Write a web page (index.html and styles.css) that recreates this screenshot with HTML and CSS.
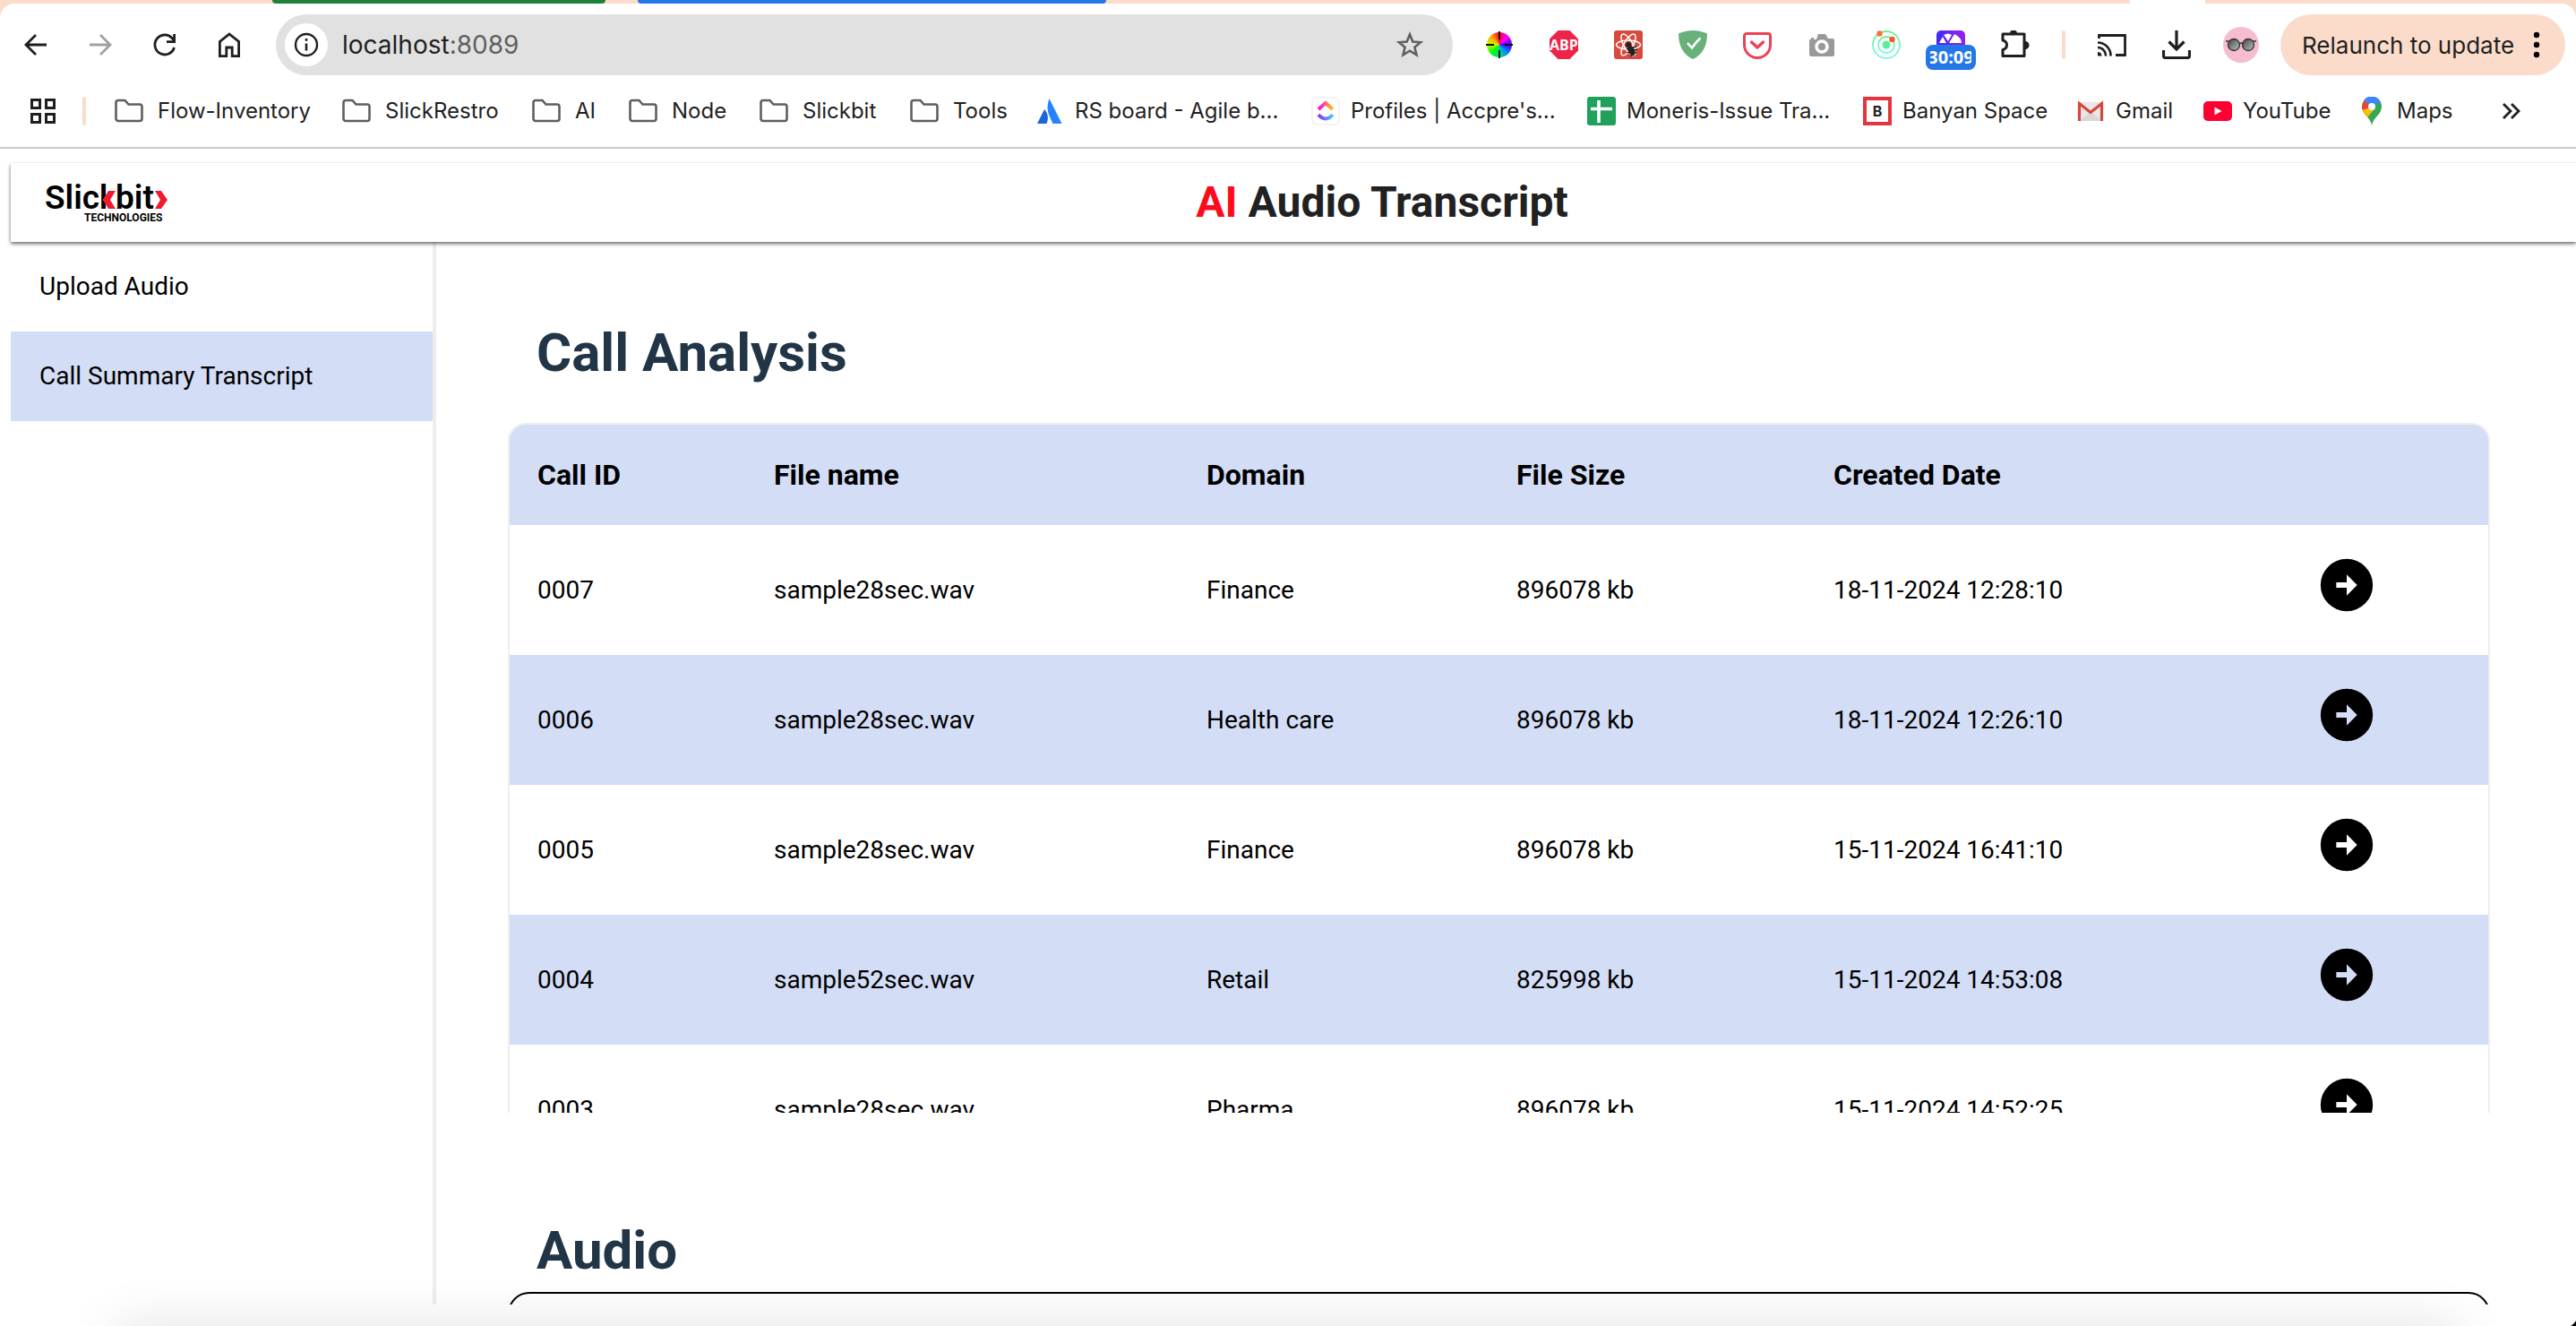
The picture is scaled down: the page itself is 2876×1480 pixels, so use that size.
FILE: index.html
```html
<!DOCTYPE html>
<html lang="en">
<head>
<meta charset="utf-8">
<title>AI Audio Transcript</title>
<link rel="stylesheet" href="styles.css">
</head>
<body>
<svg class="defs" aria-hidden="true">
  <symbol id="folder" viewBox="0 0 32 32"><path d="M1.500 6.500a2.500 2.500 0 0 1 2.500-2.500h7.500l4 4.500h12.500a2.500 2.500 0 0 1 2.500 2.500v13.500a2.500 2.500 0 0 1-2.500 2.500h-24a2.500 2.500 0 0 1-2.500-2.500z" fill="none" stroke="#5f5f5f" stroke-width="2.600"/></symbol>
  <symbol id="go" viewBox="0 0 24 24"><path d="M12 2a10 10 0 1 0 0 20 10 10 0 0 0 0-20zm0 14v-3H8v-2h4V8l4 4z"/></symbol>
</svg>

<div class="chrome">
  <div class="tabs"><i class="gap1"></i><i class="group green"></i><i class="gap2"></i><i class="group blue"></i><i class="gap3"></i><i class="active-tab"></i></div>
  <div class="toolbar">
    <div class="nav">
      <button aria-label="Back"><svg viewBox="0 0 32 32"><path d="M28 16H5M16 5 5 16l11 11" fill="none" stroke="#1f1f1f" stroke-width="2.800"/></svg></button>
      <button aria-label="Forward"><svg viewBox="0 0 32 32"><path d="M4 16h23M16 5l11 11-11 11" fill="none" stroke="#a0a0a0" stroke-width="2.800"/></svg></button>
      <button aria-label="Reload"><svg viewBox="0 0 32 32"><path d="M26.500 19a11 11 0 1 1-2.500-10.500l2 2.500" fill="none" stroke="#1f1f1f" stroke-width="2.800"/><path d="M28 4v10H18v-2.800h7.200V4z" fill="#1f1f1f"/></svg></button>
      <button aria-label="Home"><svg viewBox="0 0 32 32"><path d="M5.400 28.600V12.500L16 4l10.600 8.500v16.100h-7.400V19h-6.400v9.600z" fill="none" stroke="#1f1f1f" stroke-width="2.800"/></svg></button>
    </div>
    <div class="address">
      <button class="info" aria-label="Site information"><svg viewBox="0 0 32 32"><circle cx="16" cy="16" r="12" fill="none" stroke="#1f1f1f" stroke-width="2.400"/><path d="M16 14.500v8M16 9v2.800" stroke="#1f1f1f" stroke-width="2.600"/></svg></button>
      <div class="url">localhost<span>:8089</span></div>
      <button class="star" aria-label="Bookmark this page"><svg viewBox="0 0 32 32"><path d="M16 4.500l3.300 8 8.700.7-6.600 5.600 2.100 8.500-7.500-4.600-7.500 4.600 2.100-8.500L4 13.200l8.700-.7z" fill="none" stroke="#5f5f5f" stroke-width="2.600"/></svg></button>
    </div>
    <div class="ext">
      <button aria-label="Color picker"><span class="wheel"></span><svg class="over" viewBox="0 0 32 32"><path d="M16 1v9M16 22v9M1 16h9M22 16h9" stroke="#111" stroke-width="2"/></svg></button>
      <button aria-label="Adblock Plus"><svg viewBox="0 0 32 32"><path d="M9.500 0h13L32 9.500v13L22.500 32h-13L0 22.500v-13z" fill="#ed2448"/><text x="16" y="22" text-anchor="middle" class="abp">ABP</text></svg></button>
      <button aria-label="React tools"><svg viewBox="0 0 32 32"><rect width="32" height="32" rx="3" fill="#d64b3e"/><g fill="none" stroke="#fff" stroke-width="1.500"><ellipse cx="16" cy="16" rx="13.500" ry="5"/><ellipse cx="16" cy="16" rx="13.500" ry="5" transform="rotate(60 16 16)"/><ellipse cx="16" cy="16" rx="13.500" ry="5" transform="rotate(120 16 16)"/></g><circle cx="16" cy="16" r="3" fill="#222"/><ellipse cx="19.500" cy="22.500" rx="3.500" ry="6" transform="rotate(-25 19.500 22.500)" fill="#222"/><path d="M14 21l11-3M15 25l11-4M18 29l7-5" stroke="#222" stroke-width="1.500"/></svg></button>
      <button aria-label="AdGuard"><svg viewBox="0 0 32 32"><path d="M16 0c6 0 11 1.200 16 3.500C32 17 27 27 16 32 5 27 0 17 0 3.500 5 1.200 10 0 16 0z" fill="#68b17b"/><path d="M10 14l5 5.500c3-4.500 6-8 9.500-11" fill="none" stroke="#fff" stroke-width="2.600"/></svg></button>
      <button aria-label="Pocket"><svg viewBox="0 0 32 32"><path d="M4 3.500h24a2.500 2.500 0 0 1 2.500 2.500v10a14.500 14.500 0 0 1-29 0V6A2.500 2.500 0 0 1 4 3.500z" fill="none" stroke="#ef4056" stroke-width="3"/><path d="M9.500 13l6.500 6 6.500-6" fill="none" stroke="#ef4056" stroke-width="3.400" stroke-linecap="round" stroke-linejoin="round"/></svg></button>
      <button aria-label="Screenshot"><svg viewBox="0 0 32 32"><path d="M2 10h2V8h3v2h3l2-6h8l3 5h5a2 2 0 0 1 2 2v16a2 2 0 0 1-2 2H4a2 2 0 0 1-2-2z" fill="#999"/><circle cx="16" cy="18" r="6" fill="none" stroke="#fff" stroke-width="3.500"/></svg></button>
      <button aria-label="Orbit"><svg viewBox="0 0 32 32"><defs><linearGradient id="orb" x2="0" y2="1"><stop offset="0" stop-color="#6ff08a"/><stop offset="1" stop-color="#7ff5ea"/></linearGradient></defs><circle cx="16" cy="16" r="15" fill="none" stroke="url(#orb)" stroke-width="1.800"/><circle cx="16" cy="16" r="9" fill="none" stroke="url(#orb)" stroke-width="1.800"/><circle cx="16" cy="16" r="4.500" fill="#5deb9c"/><circle cx="8.500" cy="3.500" r="3.200" fill="#f4743b"/><circle cx="22.500" cy="10" r="3.200" fill="#ee5a2e"/></svg></button>
      <button aria-label="Timer"><svg viewBox="0 0 32 32"><defs><linearGradient id="vg"><stop offset="0" stop-color="#3d2bf5"/><stop offset="1" stop-color="#9b1df0"/></linearGradient></defs><rect y="6" width="32" height="26" fill="url(#vg)"/><rect width="32" height="12" rx="5" fill="url(#vg)"/><path d="M3 14l4-7 4 7zM8 5q5-3 9 0l-4 7zM20 4q8 4 8 10H14z" fill="#fff"/></svg><b class="badge"><span>30:09</span></b></button>
      <button aria-label="Extensions"><svg viewBox="0 0 32 32"><path d="M2 4h24v24.500H2V21.500c6-1.500 6-9 0-10.500z" fill="none" stroke="#1f1f1f" stroke-width="3" stroke-linejoin="round"/><path d="M10 3.500a4 4 0 0 1 8 0zM27 12a4.500 4.500 0 0 1 0 9z" fill="#1f1f1f"/></svg></button>
    </div>
    <i class="sep sep-tools"></i>
    <div class="ext">
      <button aria-label="Cast"><svg viewBox="0 0 32 32"><path d="M1.500 9V5.500h29v22H20" fill="none" stroke="#1f1f1f" stroke-width="2.800"/><path d="M0 13.500a14.500 14.500 0 0 1 14.500 15M0 19a9 9 0 0 1 9 9.500" fill="none" stroke="#1f1f1f" stroke-width="2.600"/><path d="M0 24a4.500 4.500 0 0 1 4.500 4.500H0z" fill="#1f1f1f"/></svg></button>
      <button aria-label="Downloads"><svg viewBox="0 0 32 32"><path d="M16 0v20M7.500 12.500l8.500 8.500 8.500-8.500M1.500 22v6.500a2 2 0 0 0 2 2h25a2 2 0 0 0 2-2V22" fill="none" stroke="#1f1f1f" stroke-width="3.200"/></svg></button>
      <button aria-label="Profile" class="avatar"><svg viewBox="0 0 40 40"><defs><linearGradient id="lens" x2="1" y2="1"><stop offset="0" stop-color="#444"/><stop offset="1" stop-color="#b9c4c6"/></linearGradient></defs><circle cx="20" cy="20" r="20" fill="#f6bcd0"/><circle cx="12" cy="20" r="6.500" fill="url(#lens)" stroke="#333" stroke-width="1.300"/><circle cx="28" cy="20" r="6.500" fill="url(#lens)" stroke="#333" stroke-width="1.300"/><path d="M3 16h4M33 16h4M18 19q2-2 4 0" fill="none" stroke="#333" stroke-width="1.600"/></svg></button>
    </div>
    <button class="relaunch">Relaunch to update<svg viewBox="0 0 8 32"><circle cx="4" cy="5" r="3.200"/><circle cx="4" cy="16" r="3.200"/><circle cx="4" cy="27" r="3.200"/></svg></button>
  </div>
  <nav class="bookmarks">
    <button class="apps" aria-label="Apps"><svg viewBox="0 0 28 28"><path d="M1.500 1.500h9v9h-9zM17.500 1.500h9v9h-9zM1.500 17.500h9v9h-9zM17.500 17.500h9v9h-9z" fill="none" stroke="#1f1f1f" stroke-width="3"/></svg></button>
    <i class="sep"></i>
    <div class="marks">
      <a href="#" class="dir"><svg><use href="#folder"/></svg>Flow-Inventory</a>
      <a href="#" class="dir"><svg><use href="#folder"/></svg>SlickRestro</a>
      <a href="#" class="dir"><svg><use href="#folder"/></svg>AI</a>
      <a href="#" class="dir"><svg><use href="#folder"/></svg>Node</a>
      <a href="#" class="dir"><svg><use href="#folder"/></svg>Slickbit</a>
      <a href="#" class="dir"><svg><use href="#folder"/></svg>Tools</a>
      <a href="#"><svg viewBox="0 0 32 32"><path d="M10 14c4 4 5 10 2.500 16H2z" fill="#1868db"/><path d="M15.500 2l14 28H19.500C15 20 11 14 15.500 2z" fill="#2684ff"/></svg>RS board - Agile b...</a>
      <a href="#"><svg viewBox="0 0 32 32"><defs><linearGradient id="c1"><stop offset="0" stop-color="#ff02f0"/><stop offset="1" stop-color="#ffc800"/></linearGradient><linearGradient id="c2"><stop offset="0" stop-color="#8930fd"/><stop offset="1" stop-color="#49ccf9"/></linearGradient></defs><rect x="1" y="1" width="30" height="30" rx="5" fill="#fff" stroke="#e8e8ee"/><path d="M8 14l8-7 8 7" fill="none" stroke="url(#c1)" stroke-width="4"/><path d="M8 20q8 9 16 0" fill="none" stroke="url(#c2)" stroke-width="4"/></svg>Profiles | Accpre's...</a>
      <a href="#"><svg viewBox="0 0 32 32"><rect width="32" height="32" rx="3" fill="#1fa05b"/><path d="M13 4v25M4 13.500h24" stroke="#fff" stroke-width="3.600"/></svg>Moneris-Issue Tra...</a>
      <a href="#"><svg viewBox="0 0 32 32"><rect x="2" y="2" width="28" height="28" fill="#fff" stroke="#e5343d" stroke-width="4"/><text x="16" y="22" text-anchor="middle" class="bee">B</text></svg>Banyan Space</a>
      <a href="#"><svg viewBox="0 0 32 32"><path d="M2 6h28v20H2z" fill="#e8e8e8"/><path d="M4 27l12-11 12 11z" fill="#d8d8d8"/><path d="M3.500 27V7.500L16 17.500l12.500-10V27" fill="none" stroke="#d9463b" stroke-width="3.200"/></svg>Gmail</a>
      <a href="#"><svg viewBox="0 0 32 32"><rect y="5" width="32" height="22" rx="5" fill="#f03"/><path d="M12.500 11.500v9l8-4.500z" fill="#fff"/></svg>YouTube</a>
      <a href="#"><svg viewBox="0 0 32 32"><path d="M16 0a11 11 0 0 1 11 11c0 9-9 11-11 21-2-10-11-12-11-21A11 11 0 0 1 16 0z" fill="#34a853"/><path d="M16 11L7.500 17.500C6 15 5 13 5 11l2.500-7z" fill="#ea4335"/><path d="M7 4A11 11 0 0 1 26 6L16 11z" fill="#4285f4"/><path d="M5.800 15L16 11l2 4-7 8c-2-3-4-5-5.200-8z" fill="#fbbc04"/><circle cx="16" cy="11" r="4" fill="#fff"/></svg>Maps</a>
    </div>
    <button class="more" aria-label="More bookmarks"><svg viewBox="0 0 32 32"><path d="M7 8l8 8-8 8M16 8l8 8-8 8" fill="none" stroke="#1f1f1f" stroke-width="2.800"/></svg></button>
  </nav>
</div>

<div class="page">
  <header class="top">
    <svg class="logo" viewBox="0 0 140 48" role="img" aria-label="Slickbit Technologies"><text x="0" y="31" class="word">Slick</text><path d="M73 9h7v24h-7l-8-12z" fill="#fff"/><text x="79" y="31" class="word">bit</text><path d="M71 11h8l-6 10 6 10h-8l-6-10z" fill="#ee1c2e"/><path d="M123 11h7l7 10-7 10h-7l6-10z" fill="#ee1c2e"/><text x="44" y="45" class="tech">TECHNOLOGIES</text></svg>
    <h1><span>AI</span> Audio Transcript</h1>
  </header>
  <div class="body">
    <nav class="side">
      <a href="#">Upload Audio</a>
      <a href="#" class="on">Call Summary Transcript</a>
    </nav>
    <main>
      <h2>Call Analysis</h2>
      <div class="calls">
        <table>
          <colgroup><col class="c-id"><col class="c-file"><col class="c-domain"><col class="c-size"><col class="c-date"><col></colgroup>
          <thead><tr><th>Call ID</th><th>File name</th><th>Domain</th><th>File Size</th><th>Created Date</th><th></th></tr></thead>
          <tbody>
            <tr><td>0007</td><td>sample28sec.wav</td><td>Finance</td><td>896078 kb</td><td>18-11-2024 12:28:10</td><td><button aria-label="Open 0007"><svg><use href="#go"/></svg></button></td></tr>
            <tr><td>0006</td><td>sample28sec.wav</td><td>Health care</td><td>896078 kb</td><td>18-11-2024 12:26:10</td><td><button aria-label="Open 0006"><svg><use href="#go"/></svg></button></td></tr>
            <tr><td>0005</td><td>sample28sec.wav</td><td>Finance</td><td>896078 kb</td><td>15-11-2024 16:41:10</td><td><button aria-label="Open 0005"><svg><use href="#go"/></svg></button></td></tr>
            <tr><td>0004</td><td>sample52sec.wav</td><td>Retail</td><td>825998 kb</td><td>15-11-2024 14:53:08</td><td><button aria-label="Open 0004"><svg><use href="#go"/></svg></button></td></tr>
            <tr><td>0003</td><td>sample28sec.wav</td><td>Pharma</td><td>896078 kb</td><td>15-11-2024 14:52:25</td><td><button aria-label="Open 0003"><svg><use href="#go"/></svg></button></td></tr>
          </tbody>
        </table>
      </div>
      <h2 class="audio-title">Audio</h2>
      <div class="player"></div>
    </main>
  </div>
</div>
<div class="shade"></div>
<div class="corner"></div>
</body>
</html>
```
FILE: styles.css
```css
* { box-sizing: border-box; }
html, body { height: 100%; margin: 0; }
body {
  display: flex;
  flex-direction: column;
  overflow: hidden;
  position: relative;
  background: #fff;
  color: #000;
  font-family: Roboto, "Liberation Sans", sans-serif;
  font-size: 28px;
}
button { border: 0; padding: 0; background: none; font: inherit; color: inherit; }
a { color: inherit; text-decoration: none; }
svg { display: block; }
.defs { position: absolute; width: 0; height: 0; }

/* browser frame */
.chrome { flex: none; background: #fbdccb; border-bottom: 2px solid #ccc; font-family: Inter, sans-serif; color: #1f1f1f; }
.tabs { display: flex; height: 4px; }
.gap1 { width: 304px; }
.gap2 { width: 36px; }
.gap3 { width: 1143px; }
.group { border-radius: 0 0 4px 4px; }
.green { width: 372px; background: #20813b; }
.blue { width: 523px; background: #2377e8; }
.active-tab { width: 84px; background: #fff; }
.toolbar { display: flex; align-items: center; height: 92px; padding: 0 12px 0 4px; background: #fff; border-radius: 16px 16px 0 0; }
.toolbar svg, .marks svg { width: 32px; height: 32px; flex: none; }
.nav, .ext { display: flex; }
.nav { margin-right: 16px; }
.nav button, .ext button { width: 72px; height: 48px; display: grid; place-items: center; position: relative; }
.address { flex: 1; height: 68px; border-radius: 34px; background: #e1e1e1; display: flex; align-items: center; padding: 0 32px 0 10px; margin-right: 16px; }
.info { width: 48px; height: 48px; border-radius: 50%; background: #fff; display: grid; place-items: center; }
.url { flex: 1; padding-left: 16px; font-size: 28px; }
.url span { color: #5f5f5f; }
.wheel { width: 28px; height: 28px; border-radius: 50%; background: conic-gradient(#f03, #f0f, #40f, #08f, #0d8, #0f0, #cf0, #fa0, #f03); }
.over { position: absolute; }
.abp { font: 700 16px "Open Sans", sans-serif; fill: #fff; }
.bee { font: 700 16px Inter, sans-serif; fill: #222; }
.badge { position: absolute; left: 8px; top: 24px; width: 56px; height: 28px; padding: 0 5px; border-radius: 8px; background: #2377e8; color: #fff; font: 700 20px/28px "Open Sans", sans-serif; }
.badge span { display: flex; justify-content: center; overflow: hidden; }
.sep { width: 4px; height: 32px; border-radius: 2px; background: #fbdccb; }
.sep-tools { margin: 0 16px; }
.toolbar .avatar svg { width: 40px; height: 40px; }
.relaunch { width: 318px; height: 68px; margin-left: 8px; border-radius: 34px; background: #fbdccb; display: flex; align-items: center; justify-content: space-between; padding: 0 28px 0 24px; font-size: 26px; white-space: nowrap; }
.toolbar .relaunch svg { width: 8px; }
.bookmarks { display: flex; align-items: center; height: 68px; padding: 0 56px 12px 34px; background: #fff; font-size: 24px; line-height: 28px; }
.apps svg { width: 28px; height: 28px; }
.bookmarks .sep { margin: 0 32px 0 30px; }
.marks { flex: 1; display: grid; grid-template-columns: 254px 212px 108px 146px 168px 140px 308px 308px 308px 238px 142px 172px auto; }
.marks a { display: flex; align-items: center; gap: 12px; white-space: nowrap; }
.marks .dir { gap: 16px; }
.more svg { width: 32px; height: 32px; }

/* application */
.page { flex: 1; min-height: 0; margin-bottom: 24px; padding: 16px 0 0 12px; overflow: hidden; display: flex; flex-direction: column; }
.top { flex: none; display: flex; align-items: center; height: 88px; box-shadow: 0 2px 4px rgba(0,0,0,.6); clip-path: inset(-1px 0 -8px -4px); }
.logo { width: 140px; height: 48px; margin: 0 20px 0 38px; overflow: visible; }
.word { font: 600 37px Roboto, sans-serif; }
.tech { font: 700 12px Roboto, sans-serif; }
h1 { flex: 1; margin: 0; text-align: center; font-size: 48px; line-height: 56px; font-weight: 700; color: #212121; }
h1 span { color: #ff0a1b; }
.body { flex: 1; min-height: 0; display: flex; }
.side { width: 475px; flex: none; border-right: 4px solid #eee; }
.side a { display: flex; align-items: center; height: 100px; padding: 0 0 2px 32px; }
.side .on { background: #d3ddf6; }
main { flex: 1; min-width: 0; padding: 88px 96px 0 80px; }
h2 { margin: 0 0 42px; padding-left: 32px; font-size: 60px; line-height: 72px; font-weight: 700; color: #213547; }
.calls { height: 770px; overflow: hidden; border: 2px solid #eee; border-bottom: 0; border-radius: 20px 20px 0 0; }
table { width: 100%; table-layout: fixed; border-collapse: collapse; }
.c-id { width: 264px; }
.c-file { width: 483px; }
.c-domain { width: 346px; }
.c-size { width: 354px; }
.c-date { width: 538px; }
th, td { padding: 0 0 0 31px; text-align: left; }
th { height: 112px; font-size: 32px; font-weight: 700; background: #d3ddf6; }
td { height: 145px; }
tbody tr:nth-child(even) { background: #d3ddf6; }
td:last-child { padding: 0 0 4px 31px; }
td button { display: block; }
td svg { width: 70px; height: 70px; }
td:last-child { padding-bottom: 11px; }
.audio-title { margin: 118px 0 10px; }
.player { height: 120px; border: 2px solid #000; border-radius: 24px; }
.shade { position: absolute; left: 130px; right: 130px; bottom: -50px; height: 50px; box-shadow: 0 0 60px rgba(0,0,0,.12); pointer-events: none; }
.corner { position: absolute; right: 0; bottom: 0; width: 20px; height: 20px; background: radial-gradient(circle at 0 0, transparent 24px, #000 25px); }
```
